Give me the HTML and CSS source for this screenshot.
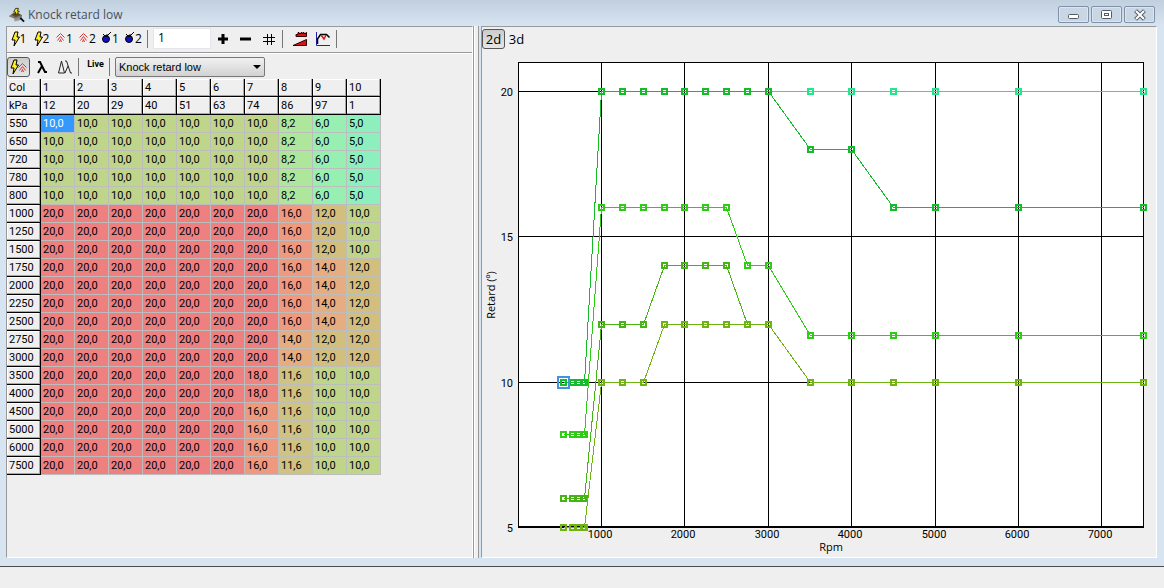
FILE: index.html
```html
<!DOCTYPE html>
<html lang="en">
<head>
<meta charset="utf-8">
<title>Knock retard low</title>
<link rel="stylesheet" href="styles.css">
</head>
<body>
<main class="window">
  <header class="titlebar">
    <svg class="app-icon" width="17" height="16" viewBox="0 0 18 16" aria-hidden="true">
      <path d="M1 9l5-3 9 2-1 5-8 1-5-3z" fill="#777"/>
      <path d="M0 9l7 3v3l-7-3z" fill="#ddd"/><path d="M7 12l7-2v3l-7 2z" fill="#999"/>
      <path d="M4 7l6-2 4 3-6 2-4-2z" fill="#5e4a1c"/>
      <path d="M8 1h3l-1 3h2L8 8l0-3H6z" fill="#f4e82a" stroke="#33300a"/>
      <path d="M13 11l4 4" stroke="#111" stroke-width="2"/>
    </svg>
    <h1 class="title">Knock retard low</h1>
    <div class="window-controls">
      <button class="win-btn" aria-label="Minimize"><svg width="14" height="12"><rect x="1.5" y="5.5" width="10" height="4" rx="1" fill="#fff" stroke="#555b66"/></svg></button>
      <button class="win-btn" aria-label="Maximize"><svg width="14" height="12"><rect x="1.5" y="1.5" width="10" height="8" rx="1" fill="#fff" stroke="#555b66"/><rect x="4.5" y="4.5" width="4" height="2" fill="#fff" stroke="#555b66"/></svg></button>
      <button class="win-btn" aria-label="Close"><svg width="14" height="12"><path d="M4 3l6 6M10 3l-6 6" stroke="#555b66" stroke-width="4" stroke-linecap="square"/><path d="M3 2l8 8M11 2l-8 8" stroke="#fff" stroke-width="2"/></svg></button>
    </div>
  </header>

  <div class="panes">
    <section class="pane" aria-label="Map table">
      <div class="toolbar">
        <button class="tool"><svg width="9" height="16"><use href="#bolt"/></svg>1</button>
        <button class="tool"><svg width="9" height="16"><use href="#bolt"/></svg>2</button>
        <button class="tool"><svg width="10" height="16"><use href="#chevrons"/></svg>1</button>
        <button class="tool"><svg width="10" height="16"><use href="#chevrons"/></svg>2</button>
        <button class="tool"><svg width="10" height="16"><use href="#bomb"/></svg>1</button>
        <button class="tool"><svg width="10" height="16"><use href="#bomb"/></svg>2</button>
        <span class="sep"></span>
        <input class="value" type="text" value="1" aria-label="Value">
        <button class="tool" aria-label="Increase"><svg width="12" height="12"><path d="M6 1v10M1 6h10" stroke="#000" stroke-width="3"/></svg></button>
        <button class="tool" aria-label="Decrease"><svg width="12" height="12"><path d="M0 6h11" stroke="#000" stroke-width="3"/></svg></button>
        <button class="tool" aria-label="Set value"><svg width="12" height="12" shape-rendering="crispEdges"><path d="M4.500 1v11M8.500 1v11M0 4.500h12M0 8.500h12" stroke="#000"/></svg></button>
        <span class="sep"></span>
        <button class="tool" aria-label="Interpolate"><svg width="16" height="16"><path d="M4 5.500V3.500h2V1.500h1v1h2v-1h1v1h1v-1h1v1h2v-1h.5v4z" fill="#e01010" stroke="#300"/><path d="M1 14.500L14.500 8.500v6z" fill="#e01010" stroke="#300"/></svg></button>
        <button class="tool" aria-label="Graph"><svg width="16" height="16"><path d="M1.500 1v13.500H15" stroke="#2020b0" fill="none"/><path d="M2.500 13V8l3-4.500h6l3 3" stroke="#000" stroke-width="1.500" fill="none"/><path d="M6 4l3 4 2-4" stroke="#c22" stroke-width="1.500" fill="none"/></svg></button>
        <span class="sep"></span>
      </div>
      <div class="toolbar toolbar-second">
        <button class="tool pressed" aria-pressed="true" aria-label="Ignition"><svg width="18" height="16"><use href="#bolt"/><use href="#chevrons" x="8" y="2"/></svg></button>
        <button class="tool" aria-label="Lambda"><svg width="12" height="14"><path d="M2 2h2l5 10h2M6 6l-4 7" stroke="#000" stroke-width="2" fill="none"/></svg></button>
        <button class="tool" aria-label="Delta lambda"><svg width="16" height="16"><path d="M1.500 14L4.500 2l3 12zM8 2h1.500l4 12H15M11 7l-3 7" stroke="#222" fill="none"/></svg></button>
        <span class="sep"></span>
        <button class="tool live">Live</button>
        <span class="sep"></span>
        <div class="map-picker">
          <select class="map-select" aria-label="Map"><option>Knock retard low</option></select>
          <svg class="arrow" width="8" height="4"><path d="M0 0h8L4 4z"/></svg>
        </div>
      </div>
      <table class="map"><thead id="map-head"></thead><tbody id="map-body"></tbody></table>
    </section>

    <div class="splitter"></div>

    <section class="pane" aria-label="Map chart">
      <div class="toolbar view-bar">
        <button class="view pressed" aria-pressed="true">2d</button>
        <button class="view">3d</button>
      </div>
      <svg id="chart" class="chart" viewBox="482 52 674 505" role="img" aria-label="Retard by rpm"></svg>
    </section>
  </div>
</main>
<footer class="statusbar"></footer>

<svg class="symbols" aria-hidden="true">
  <symbol id="bolt" width="9" height="16" viewBox="0 0 9 16"><path d="M4 1h3L6 6h2.500L3 15l1-6H1z" fill="#ffee20" stroke="#000"/></symbol>
  <symbol id="chevrons" width="10" height="16" viewBox="0 0 10 16"><path d="M.5 6.500l4-4 4 4M1.500 9.500l3-4 3 4M3.500 11l1-2.500 1 2.500" fill="none" stroke="#d33"/></symbol>
  <symbol id="bomb" width="10" height="16" viewBox="0 0 10 16"><circle cx="4" cy="8" r="3.500" fill="#1010c0" stroke="#000"/><path d="M1 3l3 3 5-5M5 3v3" stroke="#000" fill="none"/></symbol>
</svg>
<script src="map.js"></script>
</body>
</html>
```
FILE: styles.css
```css
* { box-sizing: border-box; }
body {
  margin: 0;
  min-height: 100vh;
  display: flex;
  flex-direction: column;
  background: #efefef;
  color: #000;
  font: 12px/16px "Open Sans", sans-serif;
}
button, input, select { font: inherit; color: inherit; margin: 0; }
.symbols { display: none; }

.window {
  background: #d7e4f2;
  padding: 0 7px 8px 6px;
  border-bottom: 1px solid #4c4c4c;
}
.titlebar {
  display: flex;
  align-items: center;
  gap: 3px;
  height: 26px;
  margin: 0 -7px 0 -6px;
  padding: 3px 9px 0 8px;
  background: linear-gradient(#c1d0de, #d7e4f2);
}
.title {
  flex: 1;
  margin: 0;
  color: #47515c;
  font-size: 12px;
  font-weight: 400;
}
.window-controls { display: flex; gap: 2px; }
.win-btn {
  display: grid;
  place-items: center;
  width: 31px;
  height: 17px;
  padding: 0;
  border: 1px solid #7f90a8;
  border-radius: 2px;
  background: #c9d7e5;
  box-shadow: inset 0 0 0 1px #dce6f0;
}

.panes {
  display: grid;
  grid-template-columns: 467fr 8px 676fr;
}
.pane {
  min-width: 0;
  background: #efefef;
  border: 1px solid #fff;
  border-top-color: #999;
  border-left-color: #999;
}
.splitter {
  margin: 0 2px 0 0;
  background: #efefef;
  border-left: 1px solid #999;
  border-right: 1px solid #999;
  box-shadow: inset 1px 0 #fff;
}

.toolbar {
  display: flex;
  align-items: center;
  height: 25px;
  padding-bottom: 2px;
}
.toolbar-second {
  height: 27px;
  padding: 2px 0 0;
  border-top: 1px solid #999;
  box-shadow: inset 0 1px #fff;
}
.tool, .view {
  display: flex;
  align-items: center;
  justify-content: center;
  flex: none;
  width: 23px;
  height: 20px;
  padding: 0;
  border: 1px solid transparent;
  background: none;
}
.pressed {
  border-color: #555;
  border-radius: 3px;
  background: linear-gradient(#ccc, #e6e6e6);
}
.sep {
  flex: none;
  width: 1px;
  height: 18px;
  margin: 0 5px 0 2px;
  background: #777;
}
.value {
  width: 58px;
  height: 21px;
  padding: 0 4px 2px;
  border: 1px solid #e3e6ea;
  background: #fff;
}
.live {
  align-items: flex-start;
  font: 700 9px/12px Roboto, sans-serif;
}
.map-picker { display: grid; align-items: center; }
.map-select, .arrow { grid-area: 1 / 1; }
.map-select {
  appearance: none;
  width: 150px;
  height: 20px;
  padding: 0 3px;
  border: 1px solid #777;
  border-radius: 2px;
  background: linear-gradient(#f1f1f1, #d2d2d2);
  font: 11px/16px "Liberation Sans", sans-serif;
}
.arrow {
  justify-self: end;
  margin-right: 4px;
  pointer-events: none;
}

.map {
  table-layout: fixed;
  width: 374px;
  border-collapse: separate;
  border-spacing: 0;
  font: 11px/16px Roboto, sans-serif;
}
.map th, .map td {
  height: 18px;
  padding: 1px 0 0 2px;
  text-align: left;
  font-weight: 400;
  white-space: nowrap;
  border: solid #bdbdbd;
  border-width: 0 1px 1px 0;
}
.map th {
  border-color: #000;
  box-shadow: inset -1px -1px #a8a8a8, inset 1px 1px #fff;
}
.map .v20 { background: #ee8080; }
.map .v18 { background: #ee857f; }
.map .v16 { background: #ef997f; }
.map .v14 { background: #e6ae80; }
.map .v12 { background: #d2bf7e; }
.map .v11-6 { background: #cec380; }
.map .v10 { background: #bfd58a; }
.map .v8-2 { background: #aee69c; }
.map .v6 { background: #98efb2; }
.map .v5 { background: #8eefbe; }
.map .selected { background: #3399ff; color: #fff; }

.view-bar .view { font-size: 13px; }
.chart { display: block; width: 100%; height: auto; }
.chart text { font: 11px Roboto, sans-serif; }
.chart .axis-title { font-family: "Open Sans", sans-serif; }
.grid { stroke: #000; fill: none; shape-rendering: crispEdges; }
.plot { fill: #fff; }
.line { fill: none; shape-rendering: crispEdges; }
.point { fill: none; stroke-width: 2; shape-rendering: crispEdges; }
.cursor { fill: none; stroke: #3f95dd; stroke-width: 2; shape-rendering: crispEdges; }
```
FILE: map.js
```js
const loads = [12, 20, 29, 40, 51, 63, 74, 86, 97, 1];
const rpms = [550, 650, 720, 780, 800, 1000, 1250, 1500, 1750, 2000,
  2250, 2500, 2750, 3000, 3500, 4000, 4500, 5000, 6000, 7500];
const runs = (...pairs) => pairs.flatMap(([value, count]) => Array(count).fill(value));
const base = runs([10, 5], [20, 15]);
const columns = [
  base, base, base, base, base, base,
  runs([10, 5], [20, 9], [18, 2], [16, 4]),
  runs([8.2, 5], [16, 7], [14, 2], [11.6, 6]),
  runs([6, 5], [12, 3], [14, 4], [12, 2], [10, 6]),
  runs([5, 5], [10, 3], [12, 6], [10, 6])
];

const headRow = (label, cells) =>
  `<tr><th>${label}</th>${cells.map(c => `<th>${c}</th>`).join("")}</tr>`;
document.getElementById("map-head").innerHTML =
  headRow("Col", loads.map((_, i) => i + 1)) + headRow("kPa", loads);
document.getElementById("map-body").innerHTML = rpms.map((rpm, r) =>
  `<tr><th>${rpm}</th>${columns.map((col, c) => {
    const v = col[r];
    const selected = r === 0 && c === 0 ? " selected" : "";
    return `<td class="v${String(v).replace(".", "-")}${selected}">${v.toFixed(1).replace(".", ",")}</td>`;
  }).join("")}</tr>`).join("");

const x = rpm => Math.floor(518.12 + rpm * 625.5 / 7500);
const y = value => Math.round(527 - (value - 5) * 29.07);
let svg = `<rect class="plot" x="518" y="62" width="626" height="465"/>`;
for (let rpm = 1000; rpm <= 7000; rpm += 1000) {
  svg += `<path class="grid" d="M${x(rpm) + 0.5} 62V527"/>
    <text x="${x(rpm) - 1}" y="538" text-anchor="middle">${rpm}</text>`;
}
for (const value of [5, 10, 15, 20]) {
  svg += `<path class="grid" d="M518 ${y(value) + 0.5}H1144"/>
    <text x="513" y="${y(value) + 5}" text-anchor="end">${value}</text>`;
}
svg += `<rect class="grid" x="518.5" y="62.5" width="625" height="464"/>
  <text class="axis-title" x="831" y="551" text-anchor="middle">Rpm</text>
  <text class="axis-title" transform="translate(495 295) rotate(-90)" text-anchor="middle">Retard (º)</text>`;
const series = ["#22e68a", "#14bc2c", "#2ecc14", "#46b414", "#70b414"];
series.forEach((colour, i) => {
  const points = rpms.map((rpm, r) => [x(rpm), y(columns[i + 5][r])]);
  svg += `<polyline class="line" stroke="${colour}" points="${points.map(([a, b]) => `${a + 0.5},${b + 0.5}`).join(" ")}"/>`;
  svg += points.map(([a, b]) =>
    `<rect class="point" stroke="${colour}" x="${a - 2}" y="${b - 2}" width="5" height="5"/>`).join("");
});
svg += `<rect class="cursor" x="${x(550) - 5}" y="${y(10) - 5}" width="11" height="11"/>`;
document.getElementById("chart").innerHTML = svg;
```
